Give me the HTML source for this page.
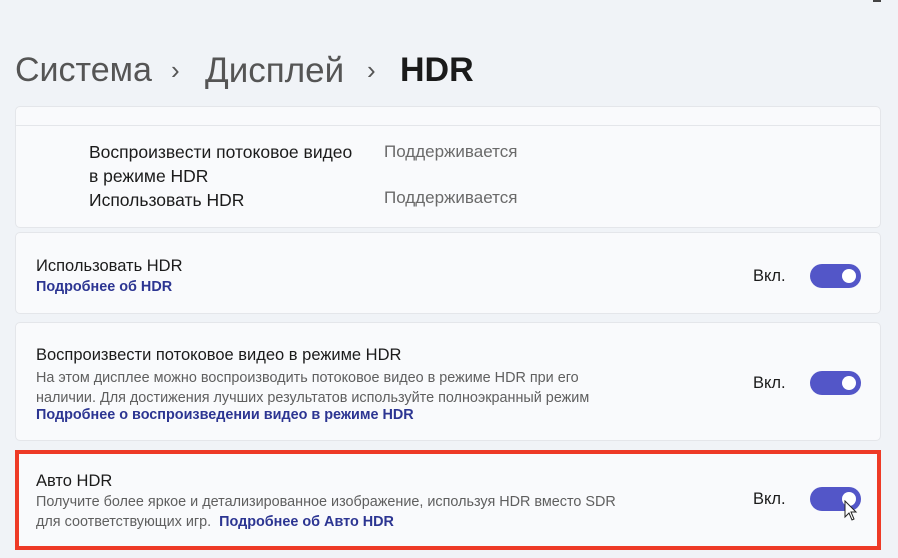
<!DOCTYPE html>
<html><head><meta charset="utf-8"><style>
body{margin:0;width:898px;height:558px;overflow:hidden;background:#f0f3f7;font-family:"Segoe UI","Liberation Sans","Noto Sans CJK SC",sans-serif;position:relative;color:#1b1b1b}
.abs{position:absolute}
.card{position:absolute;left:15px;width:866px;background:#f9fafc;border:1px solid #e4e6ea;border-radius:5px;box-sizing:border-box}
.t{font-size:16.5px;white-space:nowrap}
.s{font-size:14.4px;color:#5f5f5f;line-height:20px;white-space:nowrap}
.l{font-size:14.4px;color:#2c3592;font-weight:bold}
.tg{position:absolute;left:810px;width:51px;height:24px;border-radius:12px;background:#5356c8}
.tg:after{content:"";position:absolute;right:5px;top:5px;width:14px;height:14px;border-radius:50%;background:#fff}
.on{position:absolute;left:753px;font-size:16.5px}
.h{position:absolute;top:51px;font-size:34px;color:#555;white-space:nowrap;font-weight:500}
.ch{position:absolute;top:55px;font-size:26px;color:#555}
</style></head><body>
<div class="h" style="left:15px">Система</div>
<div class="ch" style="left:171px">›</div>
<div class="h" style="left:205px;font-size:35px">Дисплей</div>
<div class="ch" style="left:367px">›</div>
<div class="h" style="left:400px;color:#1a1a1a;font-weight:bold">HDR</div>
<div class="abs" style="left:873px;top:0;width:8px;height:2px;background:#444"></div>
<div class="card" style="top:106px;height:122px"></div>
<div class="abs" style="left:16px;top:125px;width:864px;height:1px;background:#e4e6ea"></div>
<div class="abs t" style="left:89px;top:140px;line-height:24px;font-size:17.5px">Воспроизвести потоковое видео<br>в режиме HDR<br>Использовать HDR</div>
<div class="abs t" style="left:384px;top:142px;color:#6a6a6a;font-size:17px">Поддерживается</div>
<div class="abs t" style="left:384px;top:188px;color:#6a6a6a;font-size:17px">Поддерживается</div>

<div class="card" style="top:232px;height:82px"></div>
<div class="abs t" style="left:36px;top:257px">Использовать HDR</div>
<div class="abs l" style="left:36px;top:279px">Подробнее об HDR</div>
<div class="on" style="top:267px">Вкл.</div>
<div class="tg" style="top:264px"></div>

<div class="card" style="top:322px;height:119px"></div>
<div class="abs t" style="left:36px;top:346px">Воспроизвести потоковое видео в режиме HDR</div>
<div class="abs s" style="left:36px;top:368px">На этом дисплее можно воспроизводить потоковое видео в режиме HDR при его<br>наличии. Для достижения лучших результатов используйте полноэкранный режим</div>
<div class="abs l" style="left:36px;top:407px">Подробнее о воспроизведении видео в режиме HDR</div>
<div class="on" style="top:374px">Вкл.</div>
<div class="tg" style="top:371px"></div>

<div class="card" style="top:450px;height:100px;border-color:#ee3a26;border-width:4px;border-radius:0"></div>
<div class="abs t" style="left:36px;top:472px">Авто HDR</div>
<div class="abs s" style="left:36px;top:492px">Получите более яркое и детализированное изображение, используя HDR вместо SDR<br>для соответствующих игр. &nbsp;<span class="l">Подробнее об Авто HDR</span></div>
<div class="on" style="top:490px">Вкл.</div>
<div class="tg" style="top:487px"></div>
<svg class="abs" style="left:844px;top:500px" width="14" height="22" viewBox="0 0 14 22"><path d="M1 1 L1 17 L5 13 L8 20 L10 19 L7 12 L12 12 Z" fill="#fff" stroke="#222" stroke-width="1"/></svg>
</body></html>
